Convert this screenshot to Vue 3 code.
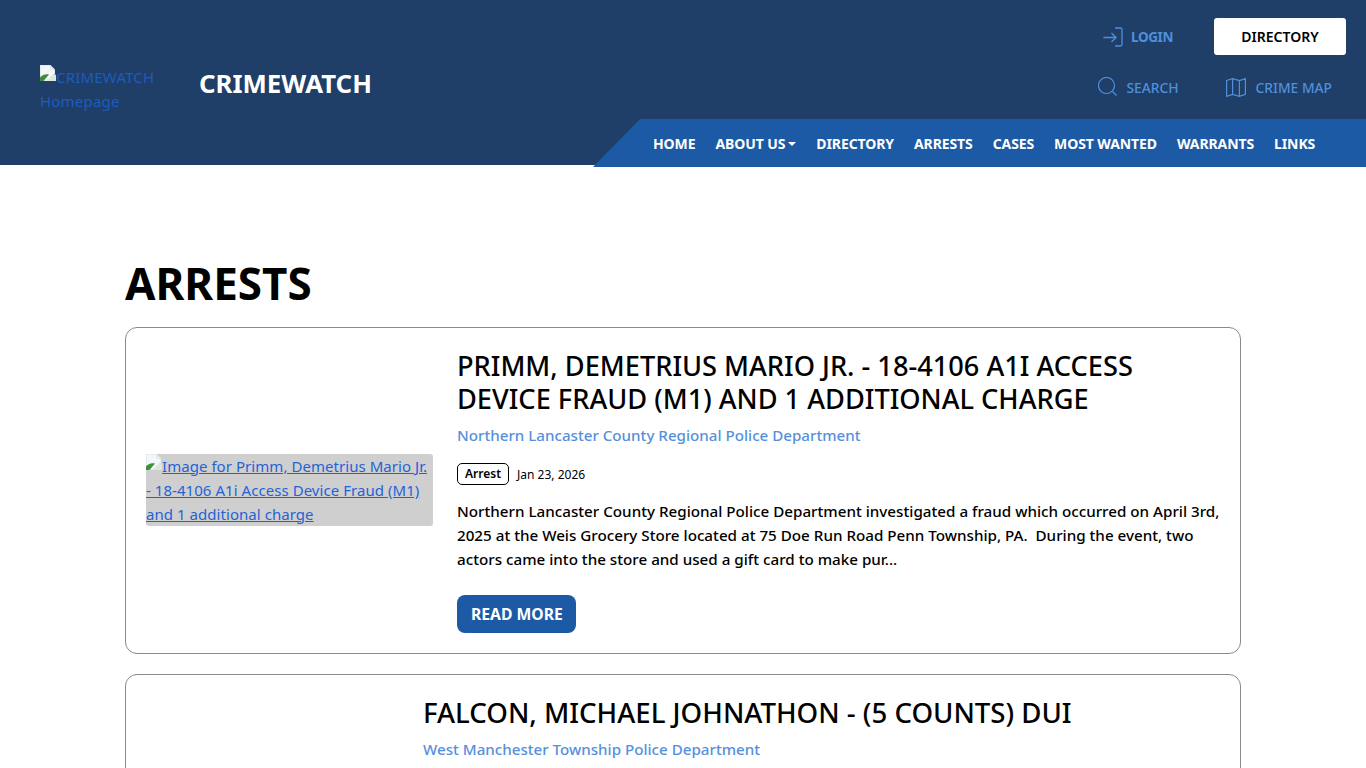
<script setup>
const nav = ['HOME', 'ABOUT US', 'DIRECTORY', 'ARRESTS', 'CASES', 'MOST WANTED', 'WARRANTS', 'LINKS']
</script>

<template>
  <div class="page">
    <header class="header">
      <div class="brand">
        <a class="logo" href="#"><svg class="broken" viewBox="0 0 16 16"><path d="M0 0h10.500l4.500 4.500v4L8 16H0z" fill="#e4ebf3"/><path d="M1 1h9v4h4v3L7 15H1z" fill="#f4f7fa"/><path d="M0 16v-3.500c2-2.500 5-4 9-3L3.500 16z" fill="#3f8f3a"/><path d="M7 16l7-7 2 1v6z" fill="#dfe8d8"/></svg>CRIMEWATCH Homepage</a>
        <span class="site">CRIMEWATCH</span>
      </div>
      <div class="right">
        <div class="row-one">
          <a class="login" href="#">
            <svg width="20" height="20" viewBox="0 0 20 20" fill="none" stroke="#4f8fdc" stroke-width="1.300"><path d="M0.500 10.500h12.500M8.500 6l4.500 4.500-4.500 4.500M12 1h5.500q1.500 0 1.500 1.500v15q0 1.500-1.500 1.500H12"/></svg>
            LOGIN
          </a>
          <a class="dir" href="#">DIRECTORY</a>
        </div>
        <div class="row-two">
          <a class="tool search" href="#">
            <svg width="20" height="20" viewBox="0 0 20 20" fill="none" stroke="#4f8fdc" stroke-width="1.200"><circle cx="8.500" cy="8.500" r="8"/><path d="M14.500 14.500l4 4"/></svg>
            SEARCH
          </a>
          <a class="tool map" href="#">
            <svg width="20" height="19" viewBox="0 0 20 19" fill="none" stroke="#4f8fdc" stroke-width="1.200"><path d="M0.600 2.500l6-1.900 6.800 1.900 6-1.900v15.800l-6 2-6.800-2-6 2zM6.600 0.600v15.800M13.400 2.500v15.800"/></svg>
            CRIME MAP
          </a>
        </div>
        <nav class="nav">
          <a v-for="item in nav" :key="item" href="#" :class="{ drop: item === 'ABOUT US' }">{{ item }}</a>
        </nav>
      </div>
    </header>

    <main class="main">
      <h1>ARRESTS</h1>
      <article class="card">
        <div class="thumb">
          <a href="#"><svg class="broken" viewBox="0 0 16 16"><path d="M0 0h10.500l4.500 4.500v4L8 16H0z" fill="#e4ebf3"/><path d="M1 1h9v4h4v3L7 15H1z" fill="#f4f7fa"/><path d="M0 16v-3.500c2-2.500 5-4 9-3L3.500 16z" fill="#3f8f3a"/><path d="M7 16l7-7 2 1v6z" fill="#dfe8d8"/></svg>Image for Primm, Demetrius Mario Jr. - 18-4106 A1i Access Device Fraud (M1) and 1 additional charge</a>
        </div>
        <div class="body">
          <h2>PRIMM, DEMETRIUS MARIO JR. - 18-4106 A1I ACCESS DEVICE FRAUD (M1) AND 1 ADDITIONAL CHARGE</h2>
          <a class="dept" href="#">Northern Lancaster County Regional Police Department</a>
          <div class="meta"><span class="badge">Arrest</span><span class="date">Jan 23, 2026</span></div>
          <p>Northern Lancaster County Regional Police Department investigated a fraud which occurred on April 3rd, 2025 at the Weis Grocery Store located at 75 Doe Run Road Penn Township, PA.&nbsp; During the event, two actors came into the store and used a gift card to make pur...</p>
          <a class="more" href="#">READ MORE</a>
        </div>
      </article>
      <article class="card second">
        <div class="thumb-empty"></div>
        <div class="body">
          <h2>FALCON, MICHAEL JOHNATHON - (5 COUNTS) DUI</h2>
          <a class="dept" href="#">West Manchester Township Police Department</a>
        </div>
      </article>
    </main>
  </div>
</template>

<style>
html, body { margin: 0; overflow: hidden; }
</style>

<style scoped>
.page {
  height: 768px;
  overflow: hidden;
  font-family: "Noto Sans", sans-serif;
  background: #fff;
  color: #000;
}
a { text-decoration: none; }
.header {
  height: 165px;
  background: #1f3f68;
  display: flex;
  justify-content: space-between;
}
.brand {
  display: flex;
  align-items: center;
  padding-left: 40px;
}
.logo {
  width: 120px;
  margin: 12px 39px 0 0;
  color: #1d5bbf;
  font-size: 15px;
  letter-spacing: 0.2px;
  line-height: 24px;
}
.broken { width: 16px; height: 16px; vertical-align: top; }
.site {
  color: #fff;
  font-size: 25.800px;
  font-weight: 700;
}
.right {
  display: flex;
  flex-direction: column;
  align-items: flex-end;
  min-width: 0;
}
.row-one {
  display: flex;
  align-items: center;
  flex: none;
  height: 37px;
  margin: 18px 20px 0 0;
}
.login {
  display: flex;
  align-items: center;
  gap: 8px;
  color: #4f8fdc;
  font-size: 13.500px;
  font-weight: 700;
  letter-spacing: -0.4px;
  margin-right: 41px;
}
.dir {
  width: 132px;
  height: 37px;
  line-height: 37px;
  text-align: center;
  background: #fff;
  color: #000;
  border-radius: 3px;
  font-size: 14px;
  font-weight: 600;
}
.row-two {
  display: flex;
  align-items: center;
  flex: none;
  gap: 47px;
  height: 26px;
  margin: 19px 34px 19px 0;
}
.tool {
  display: flex;
  align-items: center;
  color: #4f8fdc;
  font-size: 13.800px;
  font-weight: 500;
}
.search { gap: 8px; }
.map { gap: 10px; }
.nav {
  flex: none;
  width: 713px;
  height: 48px;
  margin-bottom: -2px;
  padding-left: 60px;
  background: #1d5aa6;
  clip-path: polygon(47px 0, 100% 0, 100% 100%, 0 100%);
  display: flex;
  align-items: center;
  gap: 20px;
  position: relative;
  z-index: 1;
}
.nav a {
  color: #fff;
  font-size: 14px;
  font-weight: 700;
  letter-spacing: -0.1px;
  white-space: nowrap;
}
.drop::after {
  content: "";
  display: inline-block;
  margin-left: 3px;
  vertical-align: 3px;
  border-top: 4px solid #fff;
  border-left: 4px solid transparent;
  border-right: 4px solid transparent;
}
.main {
  width: 1116px;
  margin: 0 auto;
  padding-top: 89px;
}
h1 {
  margin: 0 0 15px;
  font-size: 44px;
  line-height: 58px;
  font-weight: 700;
}
.card {
  display: flex;
  align-items: center;
  gap: 24px;
  box-sizing: border-box;
  border: 1px solid #8a8a8a;
  border-radius: 12px;
  padding: 21px 20px 20px;
  margin-bottom: 20px;
}
.thumb {
  flex: 0 0 287px;
  margin-bottom: 3px;
  background: #cfcfcf;
  border-radius: 3px;
  font-size: 15px;
  letter-spacing: 0.05px;
  line-height: 24px;
}
.thumb a { color: #1f63d6; text-decoration: underline; }
.body { flex: 1; min-width: 0; }
h2 {
  margin: 0 0 8px;
  font-size: 27.200px;
  line-height: 33px;
  font-weight: 500;
}
.second h2 { font-size: 27.600px; }
.dept {
  display: block;
  color: #5590dc;
  font-size: 15.150px;
  font-weight: 500;
  line-height: 24px;
}
.meta {
  display: flex;
  align-items: center;
  gap: 8px;
  margin-top: 16px;
}
.badge {
  border: 1px solid #000;
  border-radius: 5px;
  padding: 0 7px;
  font-size: 12px;
  font-weight: 600;
  line-height: 20px;
}
.date { font-size: 12px; }
p {
  margin: 14px 0 0;
  font-size: 15.200px;
  font-weight: 500;
  line-height: 24px;
}
.more {
  display: inline-block;
  margin-top: 24px;
  padding: 0 13px 0 14px;
  height: 38px;
  line-height: 38px;
  border-radius: 8px;
  background: #1d5aa6;
  color: #fff;
  font-size: 15.700px;
  font-weight: 700;
}
.second { align-items: flex-start; }
.thumb-empty { flex: 0 0 253px; }
</style>
